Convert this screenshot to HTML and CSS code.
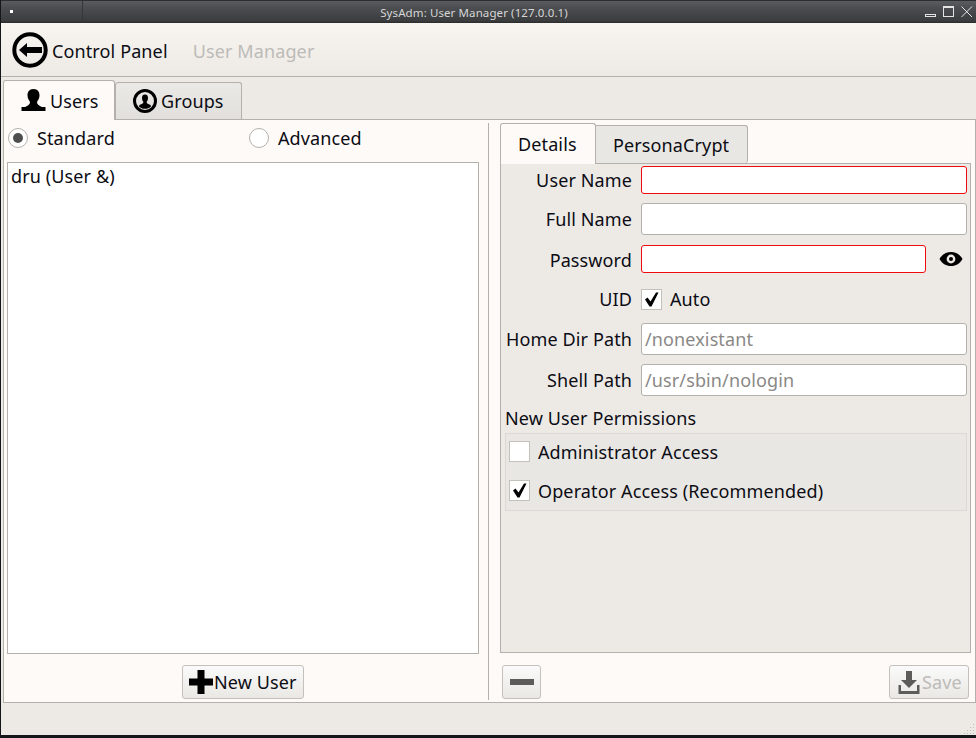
FILE: index.html
```html
<!DOCTYPE html>
<html lang="en">
<head>
    <meta charset="UTF-8">
    <title>SysAdm: User Manager (127.0.0.1)</title>
    <link rel="stylesheet" href="styles.css">
</head>
<body>
<div class="window">
    <div class="titlebar">
        <div class="menu-btn"><span class="menu-dot"></span></div>
        <div class="title">SysAdm: User Manager (127.0.0.1)</div>
        <div class="win-btns">
            <svg width="12" height="4" viewBox="0 0 12 4"><rect x="0.5" y="0.5" width="10" height="2" fill="none" stroke="#e4e4e4"/></svg>
            <svg width="12" height="12" viewBox="0 0 12 12"><rect x="0.5" y="0.5" width="10" height="10" fill="none" stroke="#e4e4e4"/><rect x="0" y="0" width="11" height="2" fill="#e4e4e4"/></svg>
            <svg width="12" height="12" viewBox="0 0 12 12"><path d="M0.5 0.5L11 11M11 0.5L0.5 11" stroke="#e4e4e4" fill="none"/></svg>
        </div>
    </div>

    <div class="toolbar">
        <svg class="back-icon" width="36" height="36" viewBox="0 0 36 36">
            <circle cx="18" cy="18" r="15.7" fill="none" stroke="#000" stroke-width="4"/>
            <path d="M7 18L15 11V15H30V21H15V25Z" fill="#000"/>
        </svg>
        <span class="tool-label">Control Panel</span>
        <span class="tool-label muted">User Manager</span>
    </div>

    <div class="main-tabs">
        <div class="tab tab-users active">
            <svg width="25" height="23" viewBox="0 0 25 23">
                <path d="M12.500 0C8 0 6.500 3 6.500 6.500C6.500 9.500 8 11 9 13C9 15.500 7 16.500 3 18.500H22C18 16.500 16 15.500 16 13C17 11 18.500 9.500 18.500 6.500C18.500 3 17 0 12.500 0Z" fill="#000"/>
                <rect x="0.500" y="18" width="24" height="4" fill="#000"/>
            </svg>
            <span>Users</span>
        </div>
        <div class="tab tab-groups">
            <svg width="24" height="24" viewBox="0 0 24 24">
                <circle cx="12" cy="12" r="10.500" fill="none" stroke="#000" stroke-width="3"/>
                <path d="M12 5.500C9.700 5.500 9 7.200 9 9C9 11 9.800 12 10.400 13C10.400 14.500 8.500 15 7 15.700C6.300 16 6 16.700 6 17.500C7.500 19 9.800 19.800 12 19.800C14.200 19.800 16.500 19 18 17.500C18 16.700 17.700 16 17 15.700C15.500 15 13.600 14.500 13.600 13C14.200 12 15 11 15 9C15 7.200 14.300 5.500 12 5.500Z" fill="#000"/>
            </svg>
            <span>Groups</span>
        </div>
    </div>

    <div class="panel">
        <div class="left-pane">
            <div class="radios">
                <label class="radio-item"><span class="radio checked"></span>Standard</label>
                <label class="radio-item"><span class="radio"></span>Advanced</label>
            </div>
            <div class="user-list">dru (User &amp;)</div>
            <div class="left-foot">
                <div class="btn btn-new">
                    <svg width="24" height="24" viewBox="0 0 24 24"><path d="M8.500 0H15.500V8.500H24V15.500H15.500V24H8.500V15.500H0V8.500H8.500Z" fill="#000"/></svg>
                    <span>New User</span>
                </div>
            </div>
        </div>

        <div class="splitter"></div>

        <div class="right-pane">
            <div class="sub-tabs">
                <div class="sub-tab active">Details</div>
                <div class="sub-tab">PersonaCrypt</div>
            </div>
            <div class="details">
                <div class="row row-user">
                    <div class="lbl">User Name</div>
                    <div class="field bad"></div>
                </div>
                <div class="row row-full">
                    <div class="lbl">Full Name</div>
                    <div class="field"></div>
                </div>
                <div class="row row-pass">
                    <div class="lbl">Password</div>
                    <div class="field bad"></div>
                    <svg class="eye" width="24" height="16" viewBox="0 0 24 16">
                        <path d="M0.500 8C3 3.500 7 1 12 1C17 1 21 3.500 23.500 8C21 12.500 17 15 12 15C7 15 3 12.500 0.500 8Z" fill="#000"/>
                        <circle cx="12" cy="8" r="4.400" fill="#edeae6"/>
                        <circle cx="12" cy="8" r="2" fill="#000"/>
                    </svg>
                </div>
                <div class="row row-uid">
                    <div class="lbl">UID</div>
                    <span class="check on"><svg width="15" height="17" viewBox="0 0 15 17"><path d="M1 8.500L3.500 6.500L6.500 10.500L12 1.500H14.500L7.500 15.500H5.500Z" fill="#000"/></svg></span>
                    <span class="check-text">Auto</span>
                </div>
                <div class="row row-home">
                    <div class="lbl">Home Dir Path</div>
                    <div class="field hint">/nonexistant</div>
                </div>
                <div class="row row-shell">
                    <div class="lbl">Shell Path</div>
                    <div class="field hint">/usr/sbin/nologin</div>
                </div>
                <div class="perm-title">New User Permissions</div>
                <div class="perm-box">
                    <div class="perm-item">
                        <span class="check"></span>
                        <span class="check-text">Administrator Access</span>
                    </div>
                    <div class="perm-item">
                        <span class="check on"><svg width="15" height="17" viewBox="0 0 15 17"><path d="M1 8.500L3.500 6.500L6.500 10.500L12 1.500H14.500L7.500 15.500H5.500Z" fill="#000"/></svg></span>
                        <span class="check-text">Operator Access (Recommended)</span>
                    </div>
                </div>
            </div>
            <div class="right-foot">
                <div class="btn btn-del">
                    <svg width="24" height="6" viewBox="0 0 24 6"><rect width="24" height="6" fill="#5e5c5a"/></svg>
                </div>
                <div class="btn btn-save">
                    <svg width="22" height="23" viewBox="0 0 22 23">
                        <path d="M8 0H14V9H19L11 17L3 9H8Z" fill="#5e5c5a"/>
                        <path d="M0.500 14H3V20H19V14H21.500V23H0.500Z" fill="#5e5c5a"/>
                    </svg>
                    <span>Save</span>
                </div>
            </div>
        </div>
    </div>
    <div class="statusbar">
        <svg width="12" height="12" viewBox="0 0 12 12" fill="#c4c1bd">
            <rect x="9" y="1" width="1" height="1"/>
            <rect x="6" y="4" width="1" height="1"/><rect x="9" y="4" width="1" height="1"/>
            <rect x="3" y="7" width="1" height="1"/><rect x="6" y="7" width="1" height="1"/><rect x="9" y="7" width="1" height="1"/>
            <rect x="0" y="10" width="1" height="1"/><rect x="3" y="10" width="1" height="1"/><rect x="6" y="10" width="1" height="1"/><rect x="9" y="10" width="1" height="1"/>
        </svg>
    </div>
</div>
</body>
</html>
```

FILE: styles.css
```css
* {
    padding: 0;
    margin: 0;
    box-sizing: border-box;
}

body {
    width: 976px;
    height: 738px;
    overflow: hidden;
    background: #14161a;
    font-family: "Noto Sans", "Open Sans", sans-serif;
    font-size: 18px;
    letter-spacing: 0.12px;
    color: #0c0c14;
}

.window {
    width: 975px;
    height: 735px;
    margin-left: 1px;
    background: #edeae6;
    display: flex;
    flex-direction: column;
}

/* title bar */
.titlebar {
    height: 23px;
    display: flex;
    align-items: center;
    position: relative;
    background: linear-gradient(#5a5d60 0, #4c4e51 30%, #3a3c3e 90%, #2a2b2c 100%);
    border-top: 1px solid #2c2d2e;
}

.menu-btn {
    width: 82px;
    height: 100%;
    padding: 9px 0 0 9px;
    border-right: 1px solid #353638;
}

.menu-dot {
    display: block;
    width: 3px;
    height: 3px;
    background: #fff;
}

.title {
    flex: 1;
    padding-right: 111px;
    text-align: center;
    font-size: 11.5px;
    letter-spacing: 0.1px;
    color: #d6d6d6;
}

.win-btns {
    position: absolute;
    right: 3px;
    top: 5px;
    display: flex;
    align-items: flex-end;
    gap: 6px;
}

/* toolbar */
.toolbar {
    height: 54px;
    display: flex;
    align-items: center;
    padding-left: 11px;
    background: linear-gradient(#f8f5f0, #edeae6);
    border-bottom: 1px solid #b4b1ac;
}

.back-icon {
    margin-right: 4px;
}

.tool-label {
    margin-right: 25px;
    padding-top: 2px;
}

.muted {
    color: #bdbbb8;
}

/* top tabs */
.main-tabs {
    height: 42px;
    padding: 3px 0 0 2px;
    display: flex;
    align-items: flex-end;
}

.tab {
    display: flex;
    align-items: center;
    height: 37px;
    border: 1px solid #b4b1ac;
    border-bottom: 0;
    border-radius: 3px 3px 0 0;
    background: linear-gradient(#ebe9e5, #e2e0dc);
}

.tab-users {
    width: 112px;
    height: 40px;
    padding-left: 17px;
    gap: 4px;
    background: #fdfaf7;
    position: relative;
    top: 1px;
}

.tab-groups {
    width: 127px;
    padding-left: 17px;
    gap: 4px;
}

/* main panel */
.panel {
    height: 584px;
    display: flex;
    background: #fdfaf7;
    border: 1px solid #b4b1ac;
    margin-left: 2px;
}

.left-pane {
    flex: none;
    width: 475px;
    padding-left: 3px;
    display: flex;
    flex-direction: column;
}

.radios {
    height: 36px;
    margin-bottom: 6px;
    display: flex;
    align-items: center;
    padding-left: 1px;
}

.radio-item {
    flex: none;
    display: flex;
    align-items: center;
    gap: 9px;
    width: 241px;
}

.radio {
    width: 20px;
    height: 20px;
    border-radius: 50%;
    border: 1px solid #b4b1ac;
    background: #fff;
    display: flex;
    align-items: center;
    justify-content: center;
}

.radio.checked::after {
    content: "";
    width: 10px;
    height: 10px;
    border-radius: 50%;
    background: #4e4e4e;
}

.user-list {
    height: 492px;
    padding: 0 3px;
    line-height: 26px;
    background: #fff;
    border: 1px solid #b4b1ac;
}

.left-foot {
    display: flex;
    justify-content: center;
    padding-top: 11px;
}

.btn {
    height: 34px;
    display: flex;
    align-items: center;
    border: 1px solid #c4c1bd;
    border-radius: 3px;
    background: linear-gradient(#fafafa, #eae8e4);
}

.btn-new {
    width: 122px;
    padding-left: 6px;
    gap: 1px;
}

.splitter {
    flex: none;
    width: 1px;
    margin: 3px 11px 2px 9px;
    background: #b4b1ac;
}

.right-pane {
    flex: none;
    width: 471px;
    display: flex;
    flex-direction: column;
}

.sub-tabs {
    display: flex;
    align-items: flex-end;
    height: 43px;
}

.sub-tab {
    width: 152px;
    height: 38px;
    padding-left: 17px;
    display: flex;
    align-items: center;
    border: 1px solid #b4b1ac;
    border-bottom: 0;
    border-left: 0;
    border-radius: 0 3px 3px 0;
    background: #e9e7e3;
}

.sub-tab.active {
    height: 41px;
    width: 96px;
    padding-left: 17px;
    border-left: 1px solid #b4b1ac;
    background: #fdfaf7;
    border-radius: 3px 3px 0 0;
    position: relative;
    top: 1px;
}

.details {
    height: 490px;
    padding: 2px 3px 0 4px;
    background: #edeae6;
    border: 1px solid #b4b1ac;
}

.row {
    display: flex;
    align-items: center;
    height: 32px;
}

.row-user {
    height: 28px;
}

.row-full {
    margin-top: 9px;
}

.row-pass {
    height: 28px;
    margin-top: 10px;
}

.row-pass .lbl {
    padding-top: 2px;
}

.row-uid {
    height: 22px;
    margin-top: 15px;
}

.row-home {
    margin-top: 13px;
}

.row-shell {
    margin-top: 9px;
}

.lbl {
    flex: none;
    width: 127px;
    margin-right: 9px;
    text-align: right;
    white-space: nowrap;
}

.field {
    flex: 1;
    height: 100%;
    padding: 0 3px;
    line-height: 30px;
    background: #fff;
    border: 1px solid #b4b1ac;
    border-radius: 3px;
}

.field.bad {
    border-color: #f00a0a;
}

.row-pass .field {
    flex: none;
    width: 285px;
}

.eye {
    margin-left: 13px;
}

.hint {
    color: #8a8886;
}

.check {
    flex: none;
    width: 21px;
    height: 21px;
    display: flex;
    align-items: center;
    justify-content: center;
    background: #fff;
    border: 1px solid #c4c1bd;
}

.check-text {
    margin-left: 8px;
}

.perm-title {
    margin-top: 9px;
    line-height: 26px;
}

.perm-box {
    height: 78px;
    margin-top: 2px;
    padding: 0 0 2px 3px;
    background: #e9e7e3;
    border: 1px solid #dcd9d5;
    display: flex;
    flex-direction: column;
    justify-content: center;
    gap: 18px;
}

.perm-item {
    height: 21px;
    display: flex;
    align-items: center;
}

.right-foot {
    display: flex;
    justify-content: space-between;
    padding: 12px 2px 0 2px;
}

.btn-del {
    width: 39px;
    justify-content: center;
}

.btn-save {
    width: 80px;
    padding-left: 8px;
    gap: 2px;
    color: #bdbbb8;
}

.statusbar {
    flex: 1;
    display: flex;
    justify-content: flex-end;
    align-items: flex-end;
}
```
